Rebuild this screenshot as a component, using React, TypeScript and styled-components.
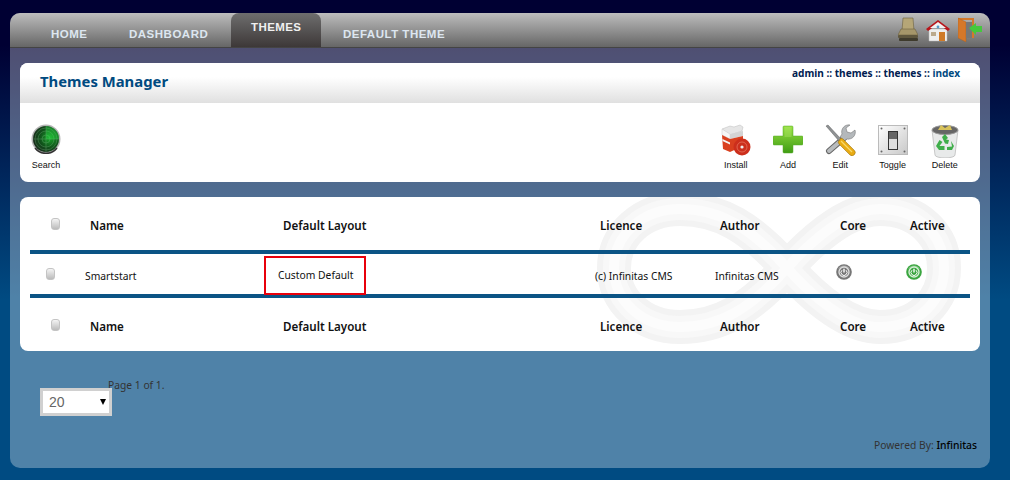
import React from "react";
import styled, { createGlobalStyle } from "styled-components";

const GlobalStyle = createGlobalStyle`
  html, body {
    margin: 0;
    height: 480px;
    overflow: hidden;
    background: linear-gradient(#000033 0, #000033 45px, #004b82 300px, #004b82 100%);
    font-family: "Noto Sans", "Open Sans", sans-serif;
  }
`;

const Page = styled.div`
  padding: 13px 20px 12px 10px;
  width: 1000px;
  box-sizing: border-box;
`;

const Shell = styled.div`
  height: 455px;
  width: 980px;
  border-radius: 10px;
  background: rgba(255, 255, 255, 0.31);
  display: flex;
  flex-direction: column;
`;

const Nav = styled.div`
  height: 34px;
  display: flex;
  align-items: stretch;
  padding-left: 21px;
  border-radius: 10px 10px 0 0;
  border-bottom: 1px solid #444;
  background: linear-gradient(#bdbdbd, #666);
`;

const Tab = styled.div<{ $active?: boolean; $w: number; $left?: number }>`
  width: ${(p) => p.$w}px;
  box-sizing: border-box;
  padding: ${(p) => (p.$active ? "8px" : "15px")} 0 0 ${(p) => p.$left ?? 20}px;
  font: bold 11.5px "Liberation Sans", Arial, sans-serif;
  letter-spacing: ${(p) => (p.$active ? "0.4px" : "0.5px")};
  color: ${(p) => (p.$active ? "#f0f0f0" : "#dde6f0")};
  border-radius: ${(p) => (p.$active ? "8px 8px 0 0" : "0")};
  background: ${(p) => (p.$active ? "linear-gradient(#6e6e6e, #3d3838)" : "none")};
`;

const NavIcons = styled.div`
  margin-left: auto;
  display: flex;
  align-items: flex-start;
  gap: 8px;
  padding: 4px 8px 0 0;
`;

const Content = styled.div`
  padding: 15px 10px 0;
  display: flex;
  flex-direction: column;
  flex: 1;
`;

const HeadCard = styled.div`
  height: 119px;
  background: #fff;
  border-radius: 8px;
  margin-bottom: 15px;
`;

const TitleBar = styled.div`
  height: 40px;
  display: flex;
  justify-content: space-between;
  padding: 0 20px;
  border-radius: 8px 8px 0 0;
  background: linear-gradient(#fff 35%, #e0e0e0);
`;

const Title = styled.h1`
  margin: 0;
  padding-top: 7px;
  font-size: 14.85px;
  font-weight: 700;
  line-height: 22px;
  color: #004a80;
`;

const Crumbs = styled.div`
  padding-top: 3px;
  font-size: 10.1px;
  line-height: 14px;
  font-weight: 700;
  color: #002050;
  span {
    color: #004a80;
  }
`;

const Toolbar = styled.div`
  display: flex;
  justify-content: space-between;
  padding: 21px 9px 0 0;
`;

const ToolGroup = styled.div`
  display: flex;
`;

const Tool = styled.div`
  width: 52.25px;
  display: flex;
  flex-direction: column;
  align-items: center;
  font: 9px/12px "Liberation Sans", Arial, sans-serif;
  color: #111;
`;

const ToolIcon = styled.div`
  height: 35px;
  svg {
    display: block;
  }
`;

const TableCard = styled.div`
  position: relative;
  height: 154px;
  padding: 0 10px;
  background: #fff;
  border-radius: 8px;
  overflow: hidden;
`;

const Watermark = styled.svg`
  position: absolute;
  left: 0;
  top: 0;
`;

const Row = styled.div<{ $h: number; $body?: boolean }>`
  position: relative;
  display: grid;
  grid-template-columns: 50px 184px 326px 120px 120px 70px 70px;
  box-sizing: border-box;
  height: ${(p) => p.$h}px;
  padding-top: ${(p) => (p.$body ? "2px" : "4px")};
  align-items: center;
  font-size: ${(p) => (p.$body ? "10.3px" : "11.6px")};
  font-weight: ${(p) => (p.$body ? 400 : 600)};
  color: #111;
  border-bottom: ${(p) => (p.$body ? "4px solid #0b5485" : "none")};
`;

const Bar = styled.div`
  position: relative;
  height: 4px;
  background: #0b5485;
`;

const Cell = styled.div<{ $pad: number }>`
  padding-left: ${(p) => p.$pad}px;
`;

const PowerCell = styled(Cell)`
  margin-top: -7px;
  svg {
    display: block;
  }
`;

const Check = styled.div<{ $x: number }>`
  width: 9px;
  height: 12px;
  margin: -3px 0 0 ${(p) => p.$x}px;
  border: 1px solid #c4c4c4;
  box-sizing: border-box;
  border-radius: 3px;
  background: linear-gradient(#f4f4f4, #bbb);
`;

const Marked = styled.div`
  width: 102px;
  height: 39px;
  box-sizing: border-box;
  border: 2px solid #e8000b;
  padding-left: 12px;
  line-height: 35px;
`;

const Pager = styled.div`
  display: flex;
  align-items: flex-start;
  padding: 27px 0 0 20px;
`;

const SelectBox = styled.div`
  position: relative;
  margin-top: 10px;
  width: 72px;
  height: 28px;
  box-sizing: border-box;
  border: 3px solid #d0d0d0;
  background: #fff;
  color: #666;
  font: 14px/22px "Liberation Sans", Arial, sans-serif;
  padding-left: 6px;
`;

const Arrow = styled.span`
  position: absolute;
  right: 3px;
  top: 8px;
  width: 0;
  height: 0;
  border: 3.5px solid transparent;
  border-top: 6px solid #000;
  border-bottom: 0;
`;

const PageInfo = styled.div`
  margin-left: -4px;
  font-size: 10.3px;
  line-height: 14px;
  color: #333;
`;

const Footer = styled.div`
  margin-top: auto;
  padding: 0 3px 16px 0;
  text-align: right;
  font-size: 10.3px;
  line-height: 14px;
  color: #333;
  b {
    color: #000;
    font-weight: 500;
  }
`;

const Power = ({ color, ring }: { color: string; ring: string }) => (
  <svg width="16" height="16" viewBox="0 0 16 16">
    <circle cx="8" cy="8" r="7.8" fill={color} />
    <path d="M2 5a7 7 0 0 1 12 0a9 5 0 0 0-12 0z" fill="#fff" opacity="0.35" />
    <circle cx="8" cy="8" r="5" fill={color} stroke={ring} strokeWidth="1.4" />
    <path d="M6 6.2a3 3 0 1 0 4 0" fill="none" stroke="#fff" strokeWidth="1" />
    <path d="M8 4.8v3.6" stroke="#fff" strokeWidth="1.4" />
  </svg>
);

const Radar = () => (
  <svg width="30" height="30" viewBox="0 0 30 30">
    <defs>
      <radialGradient id="rd" cx="0.65" cy="0.45" r="0.7">
        <stop offset="0" stopColor="#18a82a" />
        <stop offset="0.55" stopColor="#11521b" />
        <stop offset="1" stopColor="#1a261c" />
      </radialGradient>
    </defs>
    <circle cx="15" cy="15" r="14.5" fill="#b5b5b5" />
    <circle cx="15" cy="15" r="13" fill="url(#rd)" />
    <g fill="none" stroke="#7fbf88" strokeWidth="0.5" opacity="0.6">
      <circle cx="15" cy="15" r="4" />
      <circle cx="15" cy="15" r="8" />
      <circle cx="15" cy="15" r="11" />
      <path d="M15 2v26M2 15h26" />
    </g>
    <path d="M15 15 L15 2 A13 13 0 0 1 28 15Z" fill="#2ee04a" opacity="0.35" />
    <path d="M4 24a14 14 0 0 0 22 0" fill="none" stroke="#333" strokeWidth="1.6" />
  </svg>
);

const Install = () => (
  <svg width="30" height="32" viewBox="0 0 30 32">
    <path d="M1 5l8-3 4 1 6-2 3 2-1 4-12 4z" fill="#e6e6e6" stroke="#bdbdbd" strokeWidth="0.5" />
    <path d="M1 5l8 5v5L1 11z" fill="#f6f6f6" stroke="#c8c8c8" strokeWidth="0.5" />
    <path d="M9 10l13-3v5L9 15z" fill="#d4d4d4" />
    <path d="M1 11l8 4 13-3v10L9 28l-7-3z" fill="#d9401f" />
    <path d="M1.500 15l7.500 3.500v2L1.500 17z" fill="#f4f4f4" />
    <circle cx="21" cy="23" r="8.500" fill="#cc2f1c" />
    <circle cx="21" cy="23" r="5" fill="none" stroke="#ea7a66" strokeWidth="0.7" />
    <circle cx="21" cy="23" r="1.600" fill="#eee" />
  </svg>
);

const Plus = () => (
  <svg width="30" height="32" viewBox="0 0 30 32">
    <defs>
      <linearGradient id="pl" x1="0" y1="0" x2="0" y2="1">
        <stop offset="0" stopColor="#97e042" />
        <stop offset="1" stopColor="#3f9c14" />
      </linearGradient>
    </defs>
    <path
      d="M11 2h8a1 1 0 0 1 1 1v9h9a1 1 0 0 1 1 1v7a1 1 0 0 1-1 1h-9v7a1 1 0 0 1-1 1h-8a1 1 0 0 1-1-1v-7H1a1 1 0 0 1-1-1v-7a1 1 0 0 1 1-1h9V3a1 1 0 0 1 1-1z"
      fill="url(#pl)"
      stroke="#57a82a"
      strokeWidth="0.5"
    />
    <path d="M11.500 3h7v10h-7z" fill="#b5ec70" opacity="0.35" />
  </svg>
);

const Tools = () => (
  <svg width="32" height="32" viewBox="0 0 32 32">
    {/* wrench, top right to bottom left */}
    <path d="M20 14L5 27" stroke="#666" strokeWidth="6" strokeLinecap="round" />
    <path d="M20 14L5 27" stroke="#b9bcbe" strokeWidth="4" strokeLinecap="round" />
    <path
      d="M26 1a7 7 0 0 0-8 9l-2 3 4 4 3-2a7 7 0 0 0 8-9l-4 3-4-1-1-4z"
      fill="#b4b8bb"
      stroke="#666"
      strokeWidth="0.5"
    />
    {/* screwdriver, top left to bottom right */}
    <path d="M2 2l2-1 13 14-2 2z" fill="#8f9294" stroke="#444" strokeWidth="0.4" />
    <path d="M14 18l3-4 2 1 11 11a3 3 0 0 1-4 5L15 20z" fill="#e8ab14" stroke="#8d6508" strokeWidth="0.5" />
    <path d="M17 17l11 11" stroke="#f8da6a" strokeWidth="1.2" />
  </svg>
);

const Toggle = () => (
  <svg width="30" height="32" viewBox="0 0 30 32">
    <defs>
      <linearGradient id="tg" x1="0" y1="0" x2="1" y2="1">
        <stop offset="0" stopColor="#fff" />
        <stop offset="1" stopColor="#c8c8c8" />
      </linearGradient>
    </defs>
    <rect x="0.5" y="1.5" width="29" height="29" fill="url(#tg)" stroke="#bbb" />
    <rect x="10" y="7" width="10" height="19" fill="#333" />
    <rect x="11" y="15" width="8" height="10" fill="#ddd" />
    <rect x="11" y="8" width="8" height="7" fill="#666" />
    <g fill="#666">
      <circle cx="3.5" cy="4.5" r="1" />
      <circle cx="26.5" cy="4.5" r="1" />
      <circle cx="3.5" cy="27.5" r="1" />
      <circle cx="26.5" cy="27.5" r="1" />
    </g>
  </svg>
);

const Trash = () => (
  <svg width="30" height="34" viewBox="0 0 30 34">
    <path d="M2 6l3 25a10 3 0 0 0 20 0l3-25z" fill="#e8eaea" stroke="#aaa" strokeWidth="0.6" />
    <ellipse cx="15" cy="6" rx="13" ry="4.5" fill="#666" stroke="#999" />
    <path d="M8 6l3-5 4 3 5-3 2 5z" fill="#d8c25a" />
    <path
      d="M12 13l3-3 3 4-2 1.500 3 .5-1 4-3-.5zM21 17l3 5-2 4h-5v-3l5-.5zM9.500 16l3 2-3 4h5v4H9l-3-4z"
      fill="#3fae4a"
    />
  </svg>
);

const Stack = () => (
  <svg width="20" height="25" viewBox="0 0 20 25">
    <path d="M5 1h10l1 13H4z" fill="#b5a677" stroke="#6d6240" strokeWidth="0.6" />
    <path d="M3 12h14l3 6H0z" fill="#a5966a" stroke="#6d6240" strokeWidth="0.6" />
    <rect x="0" y="18" width="20" height="3" rx="1" fill="#5f573e" />
    <rect x="1" y="21" width="19" height="3" rx="1" fill="#3e3a2c" />
  </svg>
);

const Home = () => (
  <svg width="24" height="25" viewBox="0 0 24 25">
    <path d="M3 12h18v12H3z" fill="#eee" stroke="#bbb" strokeWidth="0.5" />
    <path d="M0 12L12 3l12 9-2 2-10-7-10 7z" fill="#b8141a" />
    <path d="M12 5l8 6H4z" fill="#f2f2f2" />
    <rect x="13" y="15" width="6" height="9" fill="#cf7a28" />
    <rect x="5" y="15" width="5" height="4" fill="#bba98c" />
    <circle cx="12" cy="10" r="1.4" fill="#5a9ac8" />
  </svg>
);

const Door = () => (
  <svg width="24" height="25" viewBox="0 0 24 25">
    <path d="M0 1h16v20h-2V3H2v18z" fill="#d5782a" />
    <path d="M0 1l8 4v20l-8-4z" fill="#d5782a" stroke="#a65a1c" strokeWidth="0.4" />
    <path d="M8 5h6v16H8z" fill="#777" />
    <path d="M11 11l7-5v3h6v6h-6v3z" fill="#45c83e" />
  </svg>
);

const infinity =
  "M767 71C730 30 700 12 660 12C622 12 594 38 594 71C594 104 622 130 660 130C700 130 730 112 767 71C804 30 834 12 860 12C898 12 924 38 924 71C924 104 898 130 860 130C834 130 804 112 767 71Z";

const columns = ["Name", "Default Layout", "Licence", "Author", "Core", "Active"];
const heads = [10, 19, 10, 10, 10, 10];

const HeadRow = () => (
  <Row $h={53}>
    <Check $x={21} />
    {columns.map((c, i) => (
      <Cell key={c} $pad={heads[i]}>
        {c}
      </Cell>
    ))}
  </Row>
);

const tools = [
  { label: "Install", icon: <Install /> },
  { label: "Add", icon: <Plus /> },
  { label: "Edit", icon: <Tools /> },
  { label: "Toggle", icon: <Toggle /> },
  { label: "Delete", icon: <Trash /> },
];

export default function App() {
  return (
    <Page>
      <GlobalStyle />
      <Shell>
        <Nav>
          <Tab $w={78}>HOME</Tab>
          <Tab $w={122}>DASHBOARD</Tab>
          <Tab $active $w={90}>THEMES</Tab>
          <Tab $w={140} $left={22}>DEFAULT THEME</Tab>
          <NavIcons>
            <Stack />
            <Home />
            <Door />
          </NavIcons>
        </Nav>
        <Content>
          <HeadCard>
            <TitleBar>
              <Title>Themes Manager</Title>
              <Crumbs>
                admin :: themes :: themes :: <span>index</span>
              </Crumbs>
            </TitleBar>
            <Toolbar>
              <ToolGroup>
                <Tool>
                  <ToolIcon>
                    <Radar />
                  </ToolIcon>
                  Search
                </Tool>
              </ToolGroup>
              <ToolGroup>
                {tools.map((t) => (
                  <Tool key={t.label}>
                    <ToolIcon>{t.icon}</ToolIcon>
                    {t.label}
                  </Tool>
                ))}
              </ToolGroup>
            </Toolbar>
          </HeadCard>
          <TableCard>
            <Watermark width="960" height="154" viewBox="0 0 960 154">
              <path d={infinity} fill="none" stroke="#f3f3f3" strokeWidth="34" />
              <path d={infinity} fill="none" stroke="#f8f8f8" strokeWidth="22" />
              <path d={infinity} fill="none" stroke="#fcfcfc" strokeWidth="10" />
            </Watermark>
            <HeadRow />
            <Bar />
            <Row $h={44} $body>
              <Check $x={16} />
              <Cell $pad={5}>Smartstart</Cell>
              <Marked>Custom Default</Marked>
              <Cell $pad={5}>(c) Infinitas CMS</Cell>
              <Cell $pad={5}>Infinitas CMS</Cell>
              <PowerCell $pad={6}>
                <Power color="#767676" ring="#dcdcdc" />
              </PowerCell>
              <PowerCell $pad={6}>
                <Power color="#3aa53f" ring="#d4efd4" />
              </PowerCell>
            </Row>
            <HeadRow />
          </TableCard>
          <Pager>
            <SelectBox>
              20
              <Arrow />
            </SelectBox>
            <PageInfo>Page 1 of 1.</PageInfo>
          </Pager>
          <Footer>
            Powered By: <b>Infinitas</b>
          </Footer>
        </Content>
      </Shell>
    </Page>
  );
}
